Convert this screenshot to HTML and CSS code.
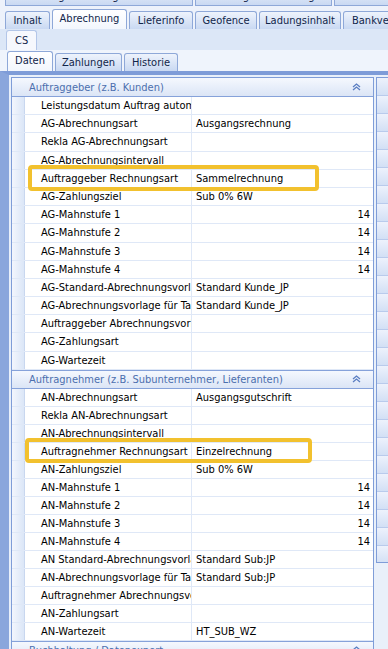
FILE: index.html
```html
<!DOCTYPE html>
<html lang="de">
<head>
    <meta charset="UTF-8">
    <title>Abrechnung</title>
    <link rel="stylesheet" href="styles.css">
</head>
<body>
    <div class="tabs tabs-top">
        <div class="tab wide">Auftragserfassung Container</div>
        <div class="tab mid">Auftragsbearbeitung</div>
        <div class="tab">Entfernungen</div>
    </div>
    <div class="tabs tabs-main">
        <div class="tab t-inhalt">Inhalt</div>
        <div class="tab active t-abr">Abrechnung</div>
        <div class="tab t-lief">Lieferinfo</div>
        <div class="tab t-geo">Geofence</div>
        <div class="tab t-lad">Ladungsinhalt</div>
        <div class="tab">Bankverbindung</div>
    </div>

    <div class="page">
        <div class="tabs tabs-cs">
            <div class="tab active">CS</div>
        </div>
        <div class="subpage">
            <div class="tabs tabs-sub">
                <div class="tab active t-daten">Daten</div>
                <div class="tab t-zahl">Zahlungen</div>
                <div class="tab t-hist">Historie</div>
            </div>
            <div class="frame">
                <div class="grid">
                    <!-- Auftraggeber -->
                    <div class="cat first">Auftraggeber (z.B. Kunden)<svg class="chev" width="9" height="8" viewBox="0 0 9 8"><path d="M1 4 L4.5 1 L8 4 M1 7 L4.5 4 L8 7" fill="none" stroke="#5b7ec2" stroke-width="1.3"/></svg></div>
                    <div class="rows rows-ag">
                        <div class="row"><span class="ind"></span><span class="label">Leistungsdatum Auftrag automatisch</span><span class="value"></span></div>
                        <div class="row"><span class="ind"></span><span class="label">AG-Abrechnungsart</span><span class="value">Ausgangsrechnung</span></div>
                        <div class="row"><span class="ind"></span><span class="label">Rekla AG-Abrechnungsart</span><span class="value"></span></div>
                        <div class="row"><span class="ind"></span><span class="label">AG-Abrechnungsintervall</span><span class="value"></span></div>
                        <div class="row"><span class="ind"></span><span class="label">Auftraggeber Rechnungsart</span><span class="value">Sammelrechnung</span></div>
                        <div class="row"><span class="ind"></span><span class="label">AG-Zahlungsziel</span><span class="value">Sub 0% 6W</span></div>
                        <div class="row"><span class="ind"></span><span class="label">AG-Mahnstufe 1</span><span class="value num">14</span></div>
                        <div class="row"><span class="ind"></span><span class="label">AG-Mahnstufe 2</span><span class="value num">14</span></div>
                        <div class="row"><span class="ind"></span><span class="label">AG-Mahnstufe 3</span><span class="value num">14</span></div>
                        <div class="row"><span class="ind"></span><span class="label">AG-Mahnstufe 4</span><span class="value num">14</span></div>
                        <div class="row"><span class="ind"></span><span class="label">AG-Standard-Abrechnungsvorlage</span><span class="value">Standard Kunde_JP</span></div>
                        <div class="row"><span class="ind"></span><span class="label">AG-Abrechnungsvorlage für Tankstellen</span><span class="value">Standard Kunde_JP</span></div>
                        <div class="row"><span class="ind"></span><span class="label">Auftraggeber Abrechnungsvorlage</span><span class="value"></span></div>
                        <div class="row"><span class="ind"></span><span class="label">AG-Zahlungsart</span><span class="value"></span></div>
                        <div class="row"><span class="ind"></span><span class="label">AG-Wartezeit</span><span class="value"></span></div>
                    </div>

                    <!-- Auftragnehmer -->
                    <div class="cat">Auftragnehmer (z.B. Subunternehmer, Lieferanten)<svg class="chev" width="9" height="8" viewBox="0 0 9 8"><path d="M1 4 L4.5 1 L8 4 M1 7 L4.5 4 L8 7" fill="none" stroke="#5b7ec2" stroke-width="1.3"/></svg></div>
                    <div class="rows">
                        <div class="row"><span class="ind"></span><span class="label">AN-Abrechnungsart</span><span class="value">Ausgangsgutschrift</span></div>
                        <div class="row"><span class="ind"></span><span class="label">Rekla AN-Abrechnungsart</span><span class="value"></span></div>
                        <div class="row"><span class="ind"></span><span class="label">AN-Abrechnungsintervall</span><span class="value"></span></div>
                        <div class="row"><span class="ind"></span><span class="label">Auftragnehmer Rechnungsart</span><span class="value">Einzelrechnung</span></div>
                        <div class="row"><span class="ind"></span><span class="label">AN-Zahlungsziel</span><span class="value">Sub 0% 6W</span></div>
                        <div class="row"><span class="ind"></span><span class="label">AN-Mahnstufe 1</span><span class="value num">14</span></div>
                        <div class="row"><span class="ind"></span><span class="label">AN-Mahnstufe 2</span><span class="value num">14</span></div>
                        <div class="row"><span class="ind"></span><span class="label">AN-Mahnstufe 3</span><span class="value num">14</span></div>
                        <div class="row"><span class="ind"></span><span class="label">AN-Mahnstufe 4</span><span class="value num">14</span></div>
                        <div class="row"><span class="ind"></span><span class="label">AN Standard-Abrechnungsvorlage</span><span class="value">Standard Sub:JP</span></div>
                        <div class="row"><span class="ind"></span><span class="label">AN-Abrechnungsvorlage für Tankstellen</span><span class="value">Standard Sub:JP</span></div>
                        <div class="row"><span class="ind"></span><span class="label">Auftragnehmer Abrechnungsvorlage</span><span class="value"></span></div>
                        <div class="row"><span class="ind"></span><span class="label">AN-Zahlungsart</span><span class="value"></span></div>
                        <div class="row"><span class="ind"></span><span class="label">AN-Wartezeit</span><span class="value">HT_SUB_WZ</span></div>
                    </div>

                    <!-- Buchhaltung -->
                    <div class="cat">Buchhaltung / Datenexport<svg class="chev" width="9" height="8" viewBox="0 0 9 8"><path d="M1 4 L4.5 1 L8 4 M1 7 L4.5 4 L8 7" fill="none" stroke="#5b7ec2" stroke-width="1.3"/></svg></div>
                </div>
                <div class="side"></div>
            </div>
        </div>
    </div>

    <!-- Markierungen -->
    <div class="mark mark-ag"></div>
    <div class="mark mark-an"></div>
</body>
</html>
```

FILE: styles.css
```css
body {
    margin: 0;
    width: 388px;
    height: 649px;
    overflow: hidden;
    position: relative;
    font-family: "DejaVu Sans", Verdana, sans-serif;
    font-stretch: condensed;
    font-size: 11px;
    color: #000;
    background-color: #edf2fb;
}
.tabs {
    display: flex;
    align-items: flex-end;
    gap: 2px;
}
.tab {
    flex-shrink: 0;
    box-sizing: border-box;
    height: 18px;
    padding: 0 8px;
    line-height: 17px;
    font-size: 11px;
    text-align: center;
    color: #10254a;
    white-space: nowrap;
    border: 1px solid #8ea8d8;
    border-bottom: none;
    border-radius: 3px 3px 0 0;
    background: linear-gradient(#eef3fc, #c9d9f2);
}
.tab.active {
    height: 20px;
    background: linear-gradient(#ffffff, #f2f6fd);
}
.tabs-top {
    height: 6px;
    padding-left: 5px;
    overflow: hidden;
}
.tabs-top .tab {
    height: 20px;
    line-height: 20px;
    border-bottom: 1px solid #8ea8d8;
    border-radius: 0;
}
.tabs-top .wide {
    width: 188px;
}
.tabs-top .mid {
    width: 137px;
}
.tabs-main {
    height: 23px;
    padding-left: 5px;
}
.tabs-main .tab {
    padding: 0;
}
.t-inhalt { width: 45px; }
.t-abr { width: 75px; }
.t-lief { width: 64px; }
.t-geo { width: 62px; }
.t-lad { width: 82px; }
.tabs-main .tab:last-child {
    padding: 0 8px;
}
.page {
    background-color: #dce7f7;
    padding-top: 1px;
}
.tabs-cs {
    padding-left: 6px;
}
.tabs-cs .tab {
    padding: 0 8px;
    line-height: 19px;
    border-color: #b3c6e8;
    background: #f6f8fd;
}
.subpage {
    background-color: #eff4fc;
    padding-top: 1px;
}
.tabs-sub {
    padding-left: 7px;
}
.tabs-sub .tab {
    padding: 0;
}
.t-daten { width: 46px; }
.t-zahl { width: 67px; }
.t-hist { width: 54px; }
.frame {
    display: flex;
    gap: 2px;
    height: 572px;
    overflow: hidden;
    padding: 2px 0 0 2px;
    border-top: 4px solid #7e9cd8;
    border-left: 9px solid #8aa6dc;
    background-color: #e9f0fa;
}
.grid {
    flex-shrink: 0;
    width: 363px;
    box-sizing: border-box;
    border: 1px solid #7f9dd8;
    background-color: #fff;
}
.cat {
    display: flex;
    align-items: center;
    height: 17px;
    padding-left: 17px;
    color: #4c6fae;
    border-top: 1px solid #86a2da;
    border-bottom: 1px solid #86a2da;
    background: linear-gradient(#f5f8fe, #dbe5f6);
    white-space: nowrap;
}
.cat.first {
    height: 18px;
    border-top: none;
}
.chev {
    margin-left: auto;
    margin-right: 12px;
}
.row {
    display: grid;
    grid-template-columns: 13px 167px 1fr;
    height: 18px;
    box-sizing: border-box;
    border-bottom: 1px solid #dfe8f7;
    line-height: 17px;
    white-space: nowrap;
}
.rows-ag .row {
    height: 18.2px;
}
.ind {
    border-right: 1px solid #c9d7ef;
    background: linear-gradient(90deg, #f3f6fd, #dbe6f7);
}
.label {
    overflow: hidden;
    padding-left: 16px;
    border-right: 1px solid #dfe8f7;
}
.value {
    overflow: hidden;
    padding: 0 3px 0 4px;
}
.value.num {
    text-align: right;
}
.side {
    flex: 1;
    height: 484px;
    border: 1px solid #7f9dd8;
    border-right: none;
    background: repeating-linear-gradient(#edf2fc 0, #d3e0f5 17px, #b9cbec 17px, #b9cbec 18px);
}
.mark {
    position: absolute;
    box-sizing: border-box;
    border: 4px solid #f2c12e;
    border-radius: 4px;
}
.mark-ag {
    left: 28px;
    top: 165px;
    width: 291px;
    height: 26px;
}
.mark-an {
    left: 25px;
    top: 438px;
    width: 287px;
    height: 25px;
}
```
